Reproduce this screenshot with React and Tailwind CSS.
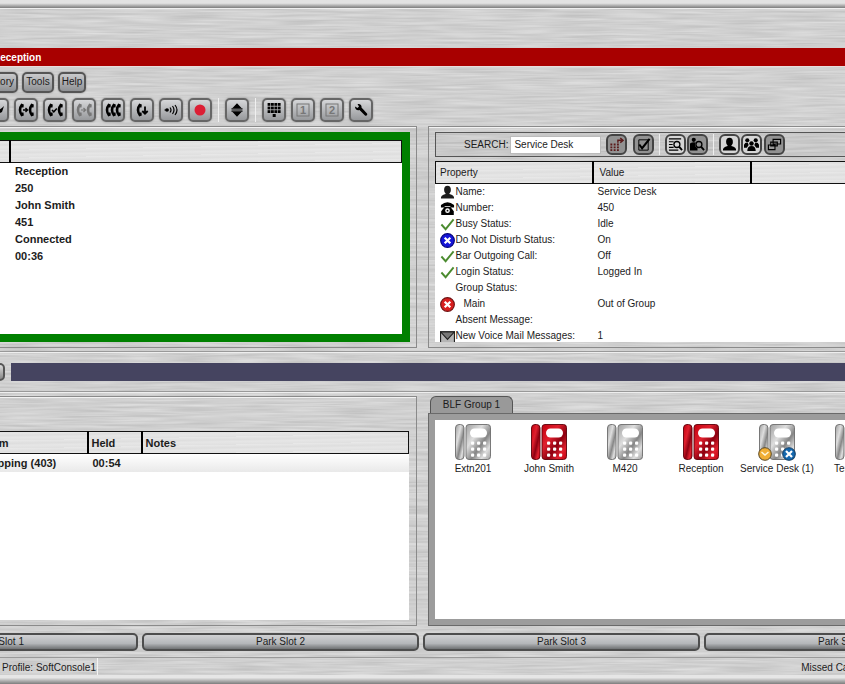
import { clsx } from "clsx";

const callDetails = ["Reception", "250", "John Smith", "451", "Connected", "00:36"];

const properties = [
  { icon: "user", label: "Name:", value: "Service Desk" },
  { icon: "phone", label: "Number:", value: "450" },
  { icon: "tick", label: "Busy Status:", value: "Idle" },
  { icon: "dnd", label: "Do Not Disturb Status:", value: "On" },
  { icon: "tick", label: "Bar Outgoing Call:", value: "Off" },
  { icon: "tick", label: "Login Status:", value: "Logged In" },
  { label: "Group Status:", value: "" },
  { icon: "out", label: "Main", value: "Out of Group", indent: true },
  { label: "Absent Message:", value: "" },
  { icon: "mail", label: "New Voice Mail Messages:", value: "1" },
];

const extensions = [
  { name: "Extn201" },
  { name: "John Smith", busy: true },
  { name: "M420" },
  { name: "Reception", busy: true },
  { name: "Service Desk (1)", badges: true },
  { name: "Test 501" },
];

export default function App() {
  return (
    <div className="relative isolate flex min-h-screen flex-col overflow-hidden bg-[#cfcfcf] font-['Liberation_Sans',Arial,sans-serif] text-[10px] leading-4 text-[#1c1c1c]">
      <BrushedMetal />

      <div className="h-[9px] border-b border-[#eeeeee] bg-linear-to-b from-[#e2e2e2] from-40% to-[#7d7d7d]" />

      {/* ================= TITLE ================= */}
      <header className="mt-[39px] h-[19px] overflow-hidden border-b border-[#e8dcdc] bg-[#a80000]">
        <h1 className="-ml-[7px] font-bold leading-[19px] text-white">Reception</h1>
      </header>

      {/* ================= MENU ================= */}
      <nav className="mt-[5px] -ml-[30px] flex gap-1">
        <MenuButton className="w-12">Directory</MenuButton>
        <MenuButton className="w-8">Tools</MenuButton>
        <MenuButton className="w-7">Help</MenuButton>
      </nav>

      {/* ================= TOOLBAR ================= */}
      <div className="mt-[5px] mb-1 -ml-[15px] flex gap-[5px]">
        <ToolButton label="Answer">
          <path d="M5 9q4 1 10-5l-2 6q-4 2-8 2z" fill="currentColor" />
        </ToolButton>
        <ToolButton label="Transfer">
          <Handset x={0} /><Handset x={10} />
          <path d="M5 8h4.500M7.500 6l2 2-2 2" fill="none" stroke="currentColor" strokeWidth="1.400" />
        </ToolButton>
        <ToolButton label="Transfer complete">
          <Handset x={0} /><Handset x={10} />
          <path d="M5 8l1.800 1.800L9.800 6.500" fill="none" stroke="currentColor" strokeWidth="1.500" />
        </ToolButton>
        <ToolButton label="Reattempt transfer" disabled>
          <Handset x={0} /><Handset x={10} />
          <path d="M5 8h4.500M7.500 6l2 2-2 2" fill="none" stroke="currentColor" strokeWidth="1.200" />
        </ToolButton>
        <ToolButton label="Conference"><Handset x={0} /><Handset x={5} /><Handset x={10} /></ToolButton>
        <ToolButton label="Hold">
          <Handset x={2} />
          <path d="M11 4.500v7M8.300 9l2.700 2.700L13.700 9" fill="none" stroke="currentColor" strokeWidth="1.800" />
        </ToolButton>
        <ToolButton label="Page">
          <circle cx="4" cy="8" r="1.800" fill="currentColor" />
          <path d="M1.500 8h4M7 5.500q2 2.500 0 5M9.500 4q3 4 0 8M12 3q4 5 0 10" fill="none" stroke="currentColor" strokeWidth="1.200" />
        </ToolButton>
        <ToolButton label="Record"><circle cx="8" cy="8" r="5.500" fill="#dc1f35" /></ToolButton>
        <Divider />
        <ToolButton label="Call queue">
          <path d="M8 1.200L12.500 6h-9zM8 14.800L12.500 10h-9zM2.500 6.200h11v1.200h-11zM2.500 8.600h11v1.200h-11z" fill="currentColor" />
        </ToolButton>
        <Divider />
        <ToolButton label="Dial pad">
          {[1, 4.600, 8.200].map((y) =>
            [1.600, 5, 8.400, 11.800].map((x) => (
              <rect key={x + "-" + y} x={x} y={y} width="2.800" height="2.800" fill="currentColor" />
            ))
          )}
          <path d="M6.700 12h3v3h-3z" fill="currentColor" />
        </ToolButton>
        <ToolButton label="Door 1" disabled><DoorNumber n="1" /></ToolButton>
        <ToolButton label="Door 2" disabled><DoorNumber n="2" /></ToolButton>
        <ToolButton label="Settings">
          <path d="M2 4.500L4.500 6 6 4.500 4.500 2c2.500-.5 4.500 1 4 3.500l5.500 6c1 1.500-.8 3-2 2L6.500 8C4 9 2 7 2 4.500z" fill="currentColor" />
        </ToolButton>
      </div>

      {/* ================= CALL + DIRECTORY ================= */}
      <div className="grid grid-cols-2 gap-[11px]">
        <Panel className="border-r pr-[6px]">
          <div className="h-[210px] border-8 border-l-0 border-[#008000] bg-white">
            <table className="w-full table-fixed text-left text-[11px] font-bold leading-[17px]">
              <thead>
                <HeaderRow className="border-l-0">
                  <th className="w-[10px] border-r-2 border-black" />
                  <th />
                </HeaderRow>
              </thead>
              <tbody>
                {callDetails.map((text) => (
                  <tr key={text}>
                    <td />
                    <td className="pl-[5px]">{text}</td>
                  </tr>
                ))}
              </tbody>
            </table>
          </div>
        </Panel>

        <Panel className="border-l pl-[6px]">
          <SearchBar />
          <div className="mt-1 h-[181px] overflow-hidden bg-white">
            <table className="w-full table-fixed text-left">
              <thead>
                <HeaderRow className="border-r-0">
                  <th className="w-[157px] border-r-2 border-black pl-1 font-normal">Property</th>
                  <th className="w-[158px] border-r-2 border-black pl-[6px] font-normal">Value</th>
                  <th />
                </HeaderRow>
              </thead>
              <tbody>
                {properties.map((p) => (
                  <tr key={p.label}>
                    <td>
                      <div className="flex h-4 items-center gap-px pl-1 whitespace-nowrap">
                        <StatusIcon name={p.icon} />
                        <span className={clsx(p.indent && "pl-2")}>{p.label}</span>
                      </div>
                    </td>
                    <td className="pl-[5px]">{p.value}</td>
                    <td />
                  </tr>
                ))}
              </tbody>
            </table>
          </div>
        </Panel>
      </div>

      {/* ================= CALL BAR ================= */}
      <div className="mt-[3px] flex h-[41px] items-center gap-[6px] border-y border-[#999] shadow-[inset_0_1px_0_#eee,0_1px_0_#eee]">
        <button aria-label="Reply" className="-ml-4 h-[18px] w-[21px] rounded-[5px] border-2 border-[#555] bg-linear-to-b from-[#ddd] to-[#888]" />
        <div className="h-[18px] flex-1 bg-[#454460]" />
      </div>

      {/* ================= HELD + BLF ================= */}
      <div className="mt-1 grid flex-1 grid-cols-2 gap-[11px]">
        <Panel className="flex flex-col border-r pt-[34px] pr-[7px]">
          <div className="flex-1 overflow-hidden bg-white">
            <div className="-ml-6">
              <table className="w-full table-fixed text-left text-[11px] font-bold">
                <thead>
                  <HeaderRow>
                    <th className="w-[111px] border-r-2 border-black pl-1">From</th>
                    <th className="w-[54px] border-r-2 border-black pl-[3px]">Held</th>
                    <th className="pl-[3px]">Notes</th>
                  </HeaderRow>
                </thead>
                <tbody>
                  <tr className="h-[18px] bg-linear-to-b from-white to-[#e9e9e9]">
                    <td className="pl-1">Shipping (403)</td>
                    <td className="pl-[5px]">00:54</td>
                    <td />
                  </tr>
                </tbody>
              </table>
            </div>
          </div>
        </Panel>

        <div className="flex min-w-0 flex-col">
          <button className="ml-[2px] h-[17px] w-[83px] rounded-t-md border border-b-0 border-[#555] bg-[#999]">BLF Group 1</button>
          <div className="flex-1 border border-r-0 border-[#6a6a6a] bg-[#9c9c9c] py-[6px] pl-[6px]">
            <ul className="flex h-full overflow-hidden bg-white">
              {extensions.map((ext) => (
                <li key={ext.name} className="w-[76px] shrink-0 pt-[3px] text-center whitespace-nowrap">
                  <DeskPhone {...ext} />
                  <span>{ext.name}</span>
                </li>
              ))}
            </ul>
          </div>
        </div>
      </div>

      {/* ================= PARK SLOTS ================= */}
      <div className="mt-[7px] -mr-[136px] -ml-[139px] grid grid-cols-4 gap-1">
        {[1, 2, 3, 4].map((n) => (
          <button
            key={n}
            className="h-[18px] rounded-[5px] border-2 border-[#4d4d4d] bg-linear-to-b from-[#d0d1d3] via-[#b5b7ba] via-60% to-[#707274] leading-[14px]"
          >
            Park Slot {n}
          </button>
        ))}
      </div>

      {/* ================= STATUS BAR ================= */}
      <footer className="mt-[6px] flex h-[27px] justify-between border-t border-[#999] whitespace-nowrap">
        <span className="h-[18px] border-r border-[#f3f3f3] pr-px pl-[2px] leading-[20px]">Profile: SoftConsole1</span>
        <span className="-mr-6 leading-[20px]">Missed Calls: 0</span>
      </footer>
      <div className="-mt-[9px] h-[9px] bg-linear-to-b from-[#e6e6e6] from-30% to-[#7d7d7d]" />
    </div>
  );
}

/* ================== COMPONENTS ================== */

function BrushedMetal() {
  return (
    <svg className="absolute inset-0 -z-10 h-full w-full" aria-hidden="true">
      <filter id="brushed" x="0" y="0" width="100%" height="100%" colorInterpolationFilters="sRGB">
        <feTurbulence type="fractalNoise" baseFrequency="0.018 0.45" numOctaves="2" seed="4" />
        <feColorMatrix values="0.16 0 0 0 0.735  0.16 0 0 0 0.735  0.16 0 0 0 0.735  0 0 0 0 1" />
      </filter>
      <rect width="100%" height="100%" filter="url(#brushed)" />
    </svg>
  );
}

function Panel({ className, children }) {
  return (
    <section className={clsx("min-w-0 overflow-hidden border-y border-[#8a8a8a] py-[5px] shadow-[inset_0_1px_0_#f2f2f2]", className)}>
      {children}
    </section>
  );
}

function HeaderRow({ className, children }) {
  return (
    <tr
      className={clsx(
        "h-[22px] border border-[#111] bg-[repeating-linear-gradient(179deg,#e8e8e8_0px,#dedede_3px,#e6e6e6_5px,#e0e0e0_8px)]",
        className
      )}
    >
      {children}
    </tr>
  );
}

function MenuButton({ className, children }) {
  return (
    <button
      className={clsx(
        "h-[21px] rounded-[5px] border-2 border-[#555] bg-linear-to-b from-[#c9cacc] to-[#8f9194] pb-[2px] leading-[14px] shadow-[0_0_2px_#888]",
        className
      )}
    >
      {children}
    </button>
  );
}

function ToolButton({ label, disabled, children }) {
  return (
    <button
      aria-label={label}
      disabled={disabled}
      className={clsx(
        "flex size-6 shrink-0 items-center justify-center rounded-[5px] border-2 border-[#666] bg-linear-to-b from-[#d6d7d9] to-[#97999c] shadow-[0_0_2px_#888]",
        disabled ? "text-[#777]" : "text-black"
      )}
    >
      <svg viewBox="0 0 16 16" className="size-4 shrink-0">{children}</svg>
    </button>
  );
}

function Handset({ x }) {
  return (
    <path
      transform={`translate(${x} 0)`}
      d="M3.200 1.600L5.800 2.400 5.500 5.400 3.700 5.600Q3 8 3.700 10.400L5.500 10.600 5.800 13.600 3.200 14.400Q-1.800 8 3.200 1.600z"
      fill="currentColor"
    />
  );
}

function DoorNumber({ n }) {
  return (
    <>
      <rect x="2" y="2" width="12" height="12" fill="none" stroke="currentColor" />
      <text x="8" y="12" textAnchor="middle" fontSize="11" fontWeight="bold" fill="currentColor">{n}</text>
    </>
  );
}

function Divider() {
  return <span className="mx-px h-6 w-px bg-[#f0f0f0]" />;
}

function SearchBar() {
  return (
    <div className="flex h-[25px] items-center border border-r-0 border-[#555] bg-black/3">
      <label htmlFor="search" className="ml-7">SEARCH:</label>
      <input
        id="search"
        defaultValue="Service Desk"
        className="ml-[2px] h-[18px] w-[91px] border border-[#bbb] bg-white px-[3px]"
      />
      <SearchButton label="Dial" active className="ml-[5px]">
        <path d="M1.500 7h2v2h-2zM5 7h2v2H5zM8.500 7h2v2h-2zM1.500 10h2v2h-2zM5 10h2v2H5zM8.500 10h2v2h-2zM1.500 13h2v2h-2zM5 13h2v2H5zM8.500 13h2v2h-2z" fill="#5b1a1a" />
        <path d="M9.500 6V3.500h4M12 1l3 2.500L12 6" fill="none" stroke="#5b1a1a" strokeWidth="1.500" />
      </SearchButton>
      <SearchButton label="Select" active className="ml-[6px]">
        <path d="M3 3h10v11H3z" fill="none" stroke="currentColor" />
        <path d="M3.500 8l3 4L14.500 2" fill="none" stroke="currentColor" strokeWidth="2.200" />
      </SearchButton>
      <SearchDivider />
      <SearchButton label="Search list">
        <path d="M1 2h13M1 5h5M1 8h4M1 11h5M1 14h10" stroke="currentColor" strokeWidth="1.200" />
        <Lens />
      </SearchButton>
      <SearchButton label="Search people" active className="ml-px">
        <circle cx="4" cy="3" r="2.200" fill="currentColor" />
        <path d="M0 14.500V7q4-3 8 0v7.500z" fill="currentColor" />
        <circle cx="9.500" cy="8" r="4" fill="#929292" />
        <Lens />
      </SearchButton>
      <SearchDivider />
      <SearchButton label="Users"><Person /></SearchButton>
      <SearchButton label="Groups" className="ml-px">
        <circle cx="3.500" cy="3.500" r="2.200" fill="currentColor" />
        <circle cx="12.500" cy="3.500" r="2.200" fill="currentColor" />
        <circle cx="8" cy="6.800" r="2.400" fill="currentColor" />
        <path d="M-.5 11.500q0-6 4.500-5.500l1 2.500-2 3zM16.500 11.500q0-6-4.500-5.500l-1 2.500 2 3zM3.500 15q0-5.500 4.500-5.500t4.500 5.500z" fill="currentColor" />
      </SearchButton>
      <SearchButton label="Directories" active className="ml-[2px]">
        <path d="M6.500 2.500h8v5h-8zM4 5.500h7v4H4zM1.500 8.500h7v5h-7z" fill="#999" stroke="currentColor" strokeWidth="1.200" />
      </SearchButton>
    </div>
  );
}

function SearchButton({ label, active, className, children }) {
  return (
    <button
      aria-label={label}
      className={clsx(
        "flex size-[21px] shrink-0 items-center justify-center rounded-[6px] border-2 border-[#444] text-black",
        active ? "bg-[#929292]" : "bg-[#d6d6d6]",
        className
      )}
    >
      <svg viewBox="0 0 16 16" className="size-[15px] shrink-0">{children}</svg>
    </button>
  );
}

function SearchDivider() {
  return <span className="mx-[5px] h-[21px] w-px bg-[#efefef]" />;
}

function Lens() {
  return (
    <>
      <circle cx="9.500" cy="8" r="3.200" fill="none" stroke="currentColor" strokeWidth="1.400" />
      <path d="M12 10.500l3 3.500" stroke="currentColor" strokeWidth="2" />
    </>
  );
}

function Person() {
  return (
    <>
      <ellipse cx="8" cy="5" rx="3.600" ry="4.200" fill="currentColor" />
      <path d="M1 14.500q-.5-4 5-5V7h4v2.500q5.500 1 5 5z" fill="currentColor" />
    </>
  );
}

function StatusIcon({ name }) {
  return (
    <svg viewBox="0 0 16 16" className="size-[15px] shrink-0" aria-hidden="true">
      {name === "user" && <Person />}
      {name === "phone" && (
        <>
          <path d="M1 6.800V4.200q7-5.500 14 0v2.600h-4V5.200H5v1.600z" />
          <path d="M5 6h6l3.700 5v4H1.300v-4z" />
          <circle cx="8" cy="10.300" r="2.500" fill="white" />
          <circle cx="8" cy="10.300" r="1" />
        </>
      )}
      {name === "tick" && <path d="M1.500 8l4.500 5L14.500 2.500" fill="none" stroke="#4b8b2f" strokeWidth="2" />}
      {(name === "dnd" || name === "out") && (
        <>
          <circle cx="8" cy="8" r="7.300" fill={name === "dnd" ? "#1515d8" : "#d81e1e"} stroke={name === "dnd" ? "#00007a" : "#6e1010"} strokeWidth="1.200" />
          <path d="M5 5l6 6M11 5l-6 6" stroke="white" strokeWidth="2.400" />
        </>
      )}
      {name === "mail" && (
        <>
          <path d="M.6 3h14.800v12H.6z" fill="#b5b5b5" stroke="#222" strokeWidth="1.200" />
          <path d="M.6 3h14.800L8 11z" fill="#777" stroke="#222" strokeWidth="1.200" />
        </>
      )}
    </svg>
  );
}

function DeskPhone({ name, busy, badges }) {
  const id = "phone-" + name.replace(/\W/g, "");
  const [edge, dark, mid, light] = busy
    ? ["#5e0009", "#8d0010", "#c4000f", "#e0202e"]
    : ["#6c6c6c", "#868686", "#a0a0a0", "#dedede"];

  return (
    <svg viewBox="0 0 38 38" className="mx-auto size-[38px]" aria-hidden="true">
      <linearGradient id={id} x1="0" y1="0" x2="1" y2="1">
        <stop offset="0" stopColor={mid} />
        <stop offset="0.350" stopColor={light} />
        <stop offset="0.600" stopColor={dark} />
        <stop offset="0.800" stopColor={light} />
        <stop offset="1" stopColor={mid} />
      </linearGradient>
      <rect x="1.500" y="1.500" width="8.500" height="35" rx="3.500" fill={`url(#${id})`} stroke={edge} strokeWidth="0.900" />
      <rect x="12" y="1.500" width="24.500" height="35" rx="3" fill={`url(#${id})`} stroke={edge} strokeWidth="0.900" />
      <rect x="16" y="5.500" width="17" height="9" rx="4.500" fill="white" />
      {[18.500, 24.500, 30.500].map((y) =>
        [17, 23, 29].map((x) => <rect key={x + "-" + y} x={x} y={y} width="3.200" height="3.200" rx="1" fill="white" />)
      )}
      {badges && (
        <>
          <circle cx="7" cy="31" r="6.300" fill="#f0ae35" stroke="#5a4a28" />
          <path d="M3.500 29l3.500 3 3.500-3" fill="none" stroke="#fff6d8" strokeWidth="1.500" />
          <circle cx="31" cy="31" r="6.300" fill="#1467ad" stroke="#103a60" />
          <path d="M28 28l6 6M34 28l-6 6" stroke="white" strokeWidth="2.200" />
        </>
      )}
    </svg>
  );
}
